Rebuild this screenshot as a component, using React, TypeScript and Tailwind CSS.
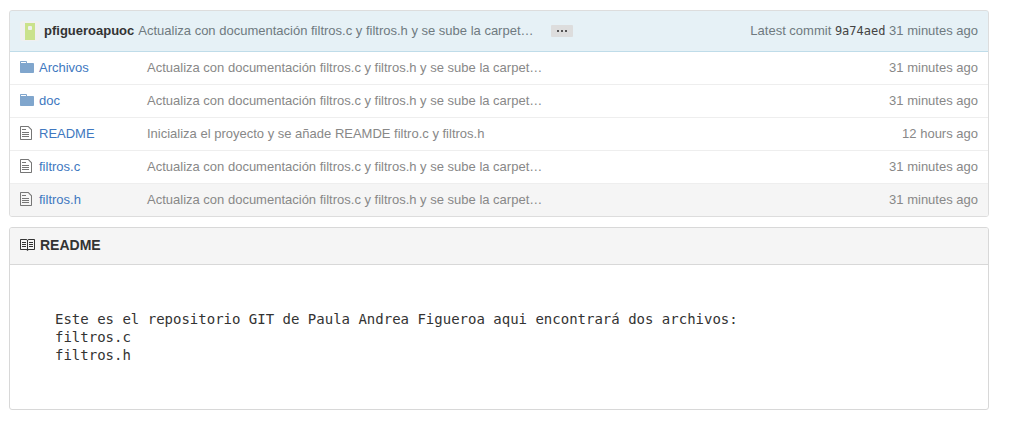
type FileEntry = {
  name: string;
  kind: "folder" | "file";
  message: string;
  age: string;
  active?: boolean;
};

const LATEST = "Actualiza con documentación filtros.c y filtros.h y se sube la carpet…";

const files: FileEntry[] = [
  { name: "Archivos", kind: "folder", message: LATEST, age: "31 minutes ago" },
  { name: "doc", kind: "folder", message: LATEST, age: "31 minutes ago" },
  {
    name: "README",
    kind: "file",
    message: "Inicializa el proyecto y se añade REAMDE filtro.c y filtros.h",
    age: "12 hours ago",
  },
  { name: "filtros.c", kind: "file", message: LATEST, age: "31 minutes ago" },
  { name: "filtros.h", kind: "file", message: LATEST, age: "31 minutes ago", active: true },
];

function FolderIcon() {
  return (
    <svg aria-hidden="true" viewBox="0 0 14 16" className="mt-px h-4 w-3.5 shrink-0 fill-[#80a6cd]">
      <path d="M13 4H7V3c0-.66-.31-1-1-1H1c-.55 0-1 .45-1 1v10c0 .55.45 1 1 1h12c.55 0 1-.45 1-1V5c0-.55-.45-1-1-1zM6 4H1V3h5v1z" />
    </svg>
  );
}

function FileIcon() {
  return (
    <svg aria-hidden="true" viewBox="0 0 12 16" className="mt-px h-4 w-3 shrink-0 fill-[#767676]">
      <path d="M6 5H2V4h4v1zM2 8h7V7H2v1zm0 2h7V9H2v1zm0 2h7v-1H2v1zm10-7.5V14c0 .55-.45 1-1 1H1c-.55 0-1-.45-1-1V2c0-.55.45-1 1-1h7.5L12 4.500zM11 5L8 2H1v12h10V5z" />
    </svg>
  );
}

function BookIcon() {
  return (
    <svg aria-hidden="true" viewBox="0 0 16 16" className="size-4 shrink-0 fill-[#333333]">
      <path d="M2 5h4v1H2V5zm0 3h4V7H2v1zm0 2h4V9H2v1zm11-5H9v1h4V5zm0 2H9v1h4V7zm0 2H9v1h4V9zm2-6v9c0 .55-.45 1-1 1H8.500l-1 1-1-1H1c-.55 0-1-.45-1-1V3c0-.55.45-1 1-1h5.500l1 1 1-1H14c.55 0 1 .45 1 1zM7 3.500L6.500 3H1v9h6V3.500zM14 3H8.500l-.5.5V12h6V3z" />
    </svg>
  );
}

function Avatar() {
  return (
    <svg aria-hidden="true" viewBox="0 0 20 20" className="size-5 shrink-0 rounded-[3px]">
      <rect width="20" height="20" fill="#f0f0f0" />
      <rect x="5" y="2" width="10" height="17" fill="#cbe28b" />
      <rect x="8" y="5" width="4" height="4" rx="1" fill="#f0f0f0" />
    </svg>
  );
}

export default function App() {
  return (
    <main className="bg-white py-2.5 pr-[43px] pl-[9px] font-['Liberation_Sans',Arial,sans-serif] text-[13px] leading-5 text-[#888888]">
      <section className="overflow-hidden rounded-[3px] border border-[#dddddd]">
        <header className="-mx-px -mt-px flex items-center rounded-t-[3px] border border-[#bfdce9] bg-[#e6f1f6] p-2.5 text-[#6f7a80]">
          <Avatar />
          <a href="#author" className="ml-1 font-bold text-[#333333]">
            pfigueroapuoc
          </a>
          <a href="#commit" className="ml-1 truncate">
            {LATEST}
          </a>
          <button
            type="button"
            aria-label="Show full commit message"
            className="ml-[17px] flex h-3 w-[22px] shrink-0 items-center justify-center gap-0.5 rounded-[1px] bg-[#dddddd]"
          >
            <span className="size-0.5 bg-[#555555]" />
            <span className="size-0.5 bg-[#555555]" />
            <span className="size-0.5 bg-[#555555]" />
          </button>
          <p className="ml-auto shrink-0 whitespace-nowrap">
            Latest commit{" "}
            <a
              href="#9a74aed"
              className="font-['DejaVu_Sans_Mono',Consolas,monospace] text-[12px] leading-none text-[#444444]"
            >
              9a74aed
            </a>{" "}
            31 minutes ago
          </p>
        </header>
        <table className="w-full border-collapse">
          <tbody>
            {files.map((file) => (
              <tr
                key={file.name}
                className={
                  file.active
                    ? "border-t border-[#eeeeee] bg-[#f5f5f5]"
                    : "border-t border-[#eeeeee] first:border-t-0"
                }
              >
                <td className="w-[137px] py-1.5 pl-2.5">
                  <a
                    href={`#${file.name}`}
                    className={
                      file.kind === "folder"
                        ? "flex items-start gap-[5px] text-[#4078c0]"
                        : "flex items-start gap-[7px] text-[#4078c0]"
                    }
                  >
                    {file.kind === "folder" ? <FolderIcon /> : <FileIcon />}
                    {file.name}
                  </a>
                </td>
                <td className="py-1.5">{file.message}</td>
                <td className="py-1.5 pr-2.5 text-right whitespace-nowrap">{file.age}</td>
              </tr>
            ))}
          </tbody>
        </table>
      </section>

      <section className="mt-2.5 overflow-hidden rounded-[3px] border border-[#d8d8d8]">
        <h1 className="flex items-center gap-1 border-b border-[#d8d8d8] bg-[#f5f5f5] px-2.5 pt-[7px] pb-[9px] text-[14px] font-bold text-[#333333]">
          <BookIcon />
          README
        </h1>
        <pre className="p-[45px] font-['DejaVu_Sans_Mono',Consolas,monospace] text-[14px] leading-[18px] whitespace-pre-wrap text-[#333333]">
          {"Este es el repositorio GIT de Paula Andrea Figueroa aqui encontrará dos archivos:\nfiltros.c\nfiltros.h"}
        </pre>
      </section>
    </main>
  );
}
